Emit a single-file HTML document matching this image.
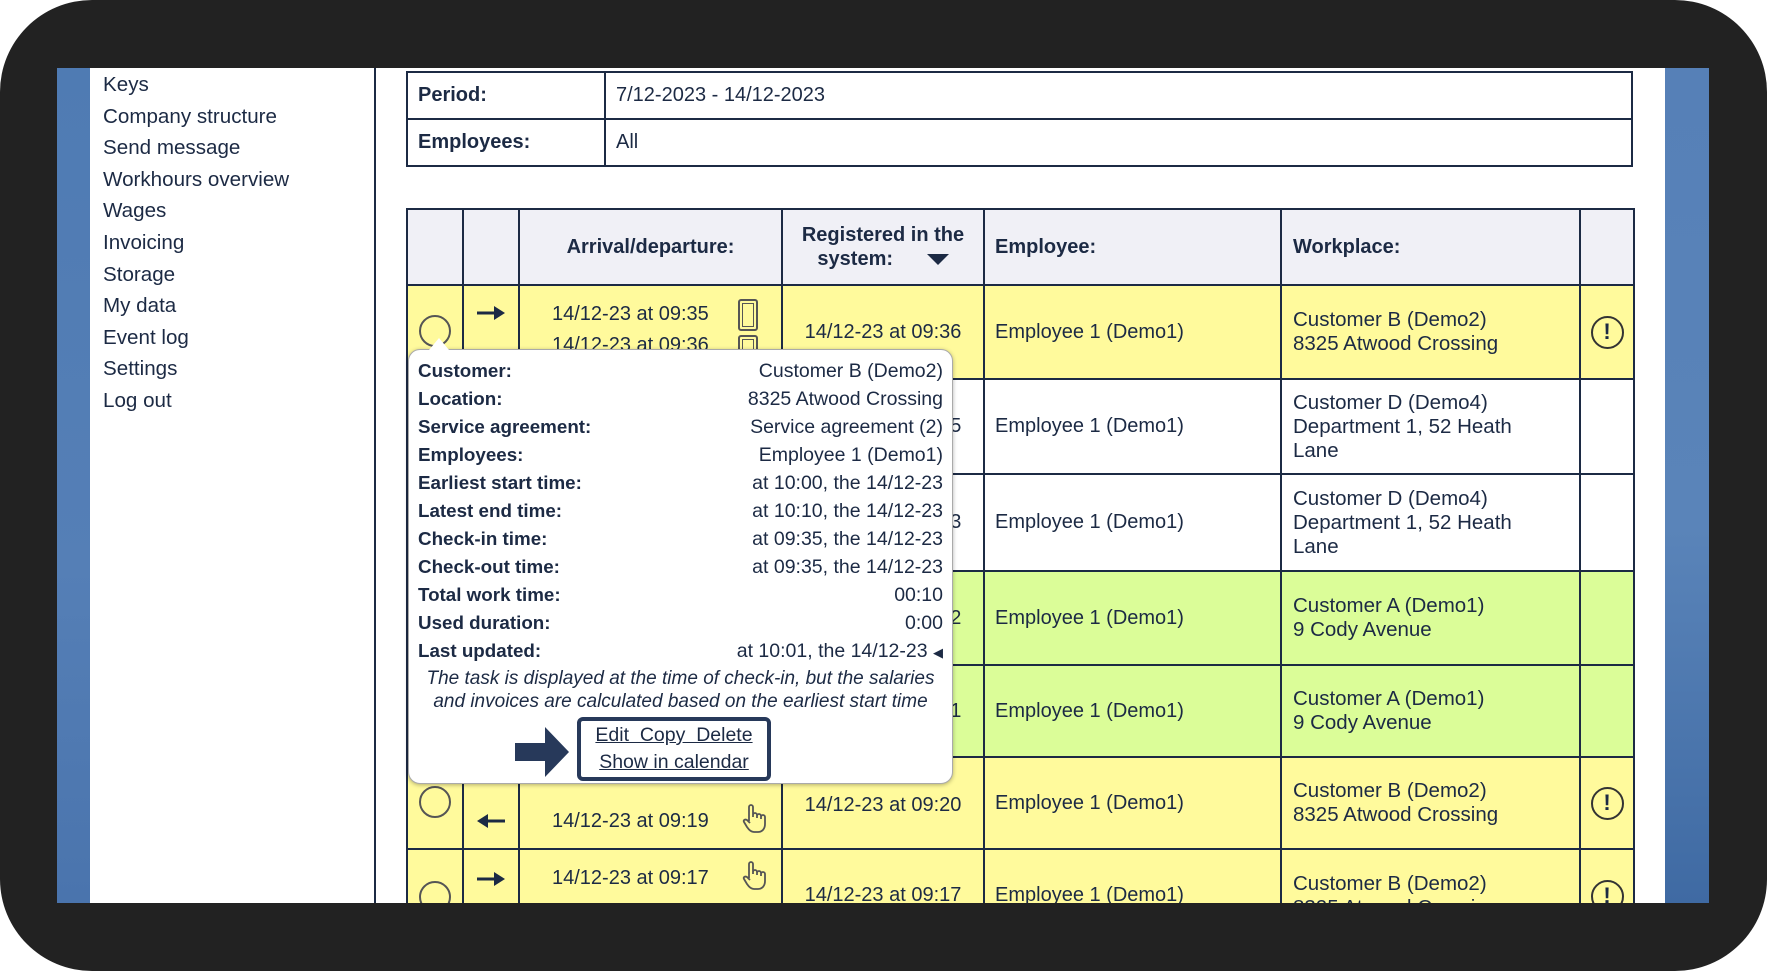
<!DOCTYPE html>
<html><head><meta charset="utf-8"><style>
*{margin:0;padding:0;box-sizing:border-box}
body{width:1767px;height:971px;background:#fff;position:relative;overflow:hidden;font-family:"Liberation Sans",Arial,sans-serif;color:#1c2a44}
.frame{position:absolute;left:0;top:0;width:1767px;height:971px;background:#222;border-radius:92px}
.screen{position:absolute;left:57px;top:68px;width:1652px;height:835px;background:#fff;overflow:hidden}
.bl{position:absolute;left:0;top:0;width:33px;height:835px;background:linear-gradient(#4f7bb3,#557fb6 60%,#4a74ad)}
.br{position:absolute;left:1608px;top:0;width:44px;height:835px;background:linear-gradient(#5680b7,#5a84b9 55%,#3f6aa3)}
.nav{position:absolute;left:33px;top:0;width:286px;height:835px;border-right:2px solid #1c2a44}
.nav div{position:absolute;left:13px;font-size:20.6px;color:#1c2a44}
table{border-collapse:collapse;position:absolute;table-layout:fixed}
td{border:2px solid #1c2a44;font-size:20px;vertical-align:middle}
.top td{height:47px;padding-left:10px}
.main th{border:2px solid #1c2a44;background:#f0f0f6;font-size:20px;font-weight:bold;height:76px}
.y td{background:#fffa9c}.g td{background:#dbfd98}.w td{background:#fff}
.c{text-align:center}.p{padding-left:10px}.wp{padding-left:11px;line-height:24px;font-size:20.5px}
.circ{display:inline-block;width:32px;height:32px;border:2px solid #555;border-radius:50%}
.exc{display:inline-block;width:33px;height:33px;border:2.5px solid #333;border-radius:50%;text-align:center;font-weight:bold;font-size:22px;line-height:28px}
.pop{position:absolute;left:351px;top:281px;width:545px;height:435px;background:#fff;border:1.5px solid #aaa;border-radius:12px;box-shadow:0 1px 4px rgba(0,0,0,.3)}
.pop .r{position:absolute;left:9px;right:9px;font-size:18.8px;height:24px}
.pop .r b{position:absolute;left:0}
.pop .r span{position:absolute;right:0;font-size:19.5px}
.ph{position:absolute;width:20px;height:32px;border:2.5px solid #555;border-radius:3px}
.ph:after{content:"";position:absolute;left:2px;top:2px;right:2px;bottom:2px;border:1.5px solid #555}
</style></head><body>
<div class="frame"></div>
<div class="screen">
 <div class="bl"></div><div class="br"></div>
 <div class="nav">
  <div style="top:5px">Keys</div>
  <div style="top:36.6px">Company structure</div>
  <div style="top:68.2px">Send message</div>
  <div style="top:99.8px">Workhours overview</div>
  <div style="top:131.4px">Wages</div>
  <div style="top:163px">Invoicing</div>
  <div style="top:194.6px">Storage</div>
  <div style="top:226.2px">My data</div>
  <div style="top:257.8px">Event log</div>
  <div style="top:289.4px">Settings</div>
  <div style="top:321px">Log out</div>
 </div>
 <table class="top" style="left:349px;top:3px;width:1227px">
  <colgroup><col style="width:198px"><col></colgroup>
  <tr><td><b>Period:</b></td><td>7/12-2023 - 14/12-2023</td></tr>
  <tr><td><b>Employees:</b></td><td>All</td></tr>
 </table>
 <table class="main" style="left:349px;top:140px;width:1227px">
  <colgroup><col style="width:56px"><col style="width:56px"><col style="width:263px"><col style="width:202px"><col style="width:297px"><col style="width:299px"><col style="width:54px"></colgroup>
  <tr><th></th><th></th><th>Arrival/departure:</th><th style="line-height:24px">Registered in the<br>system: <span style="display:inline-block;width:0;height:0;border-left:11px solid transparent;border-right:11px solid transparent;border-top:11px solid #1c2a44;margin-left:28px;vertical-align:middle"></span></th><th style="text-align:left;padding-left:10px">Employee:</th><th style="text-align:left;padding-left:11px">Workplace:</th><th></th></tr>
  <tr class="y" style="height:94px"><td class="c" style="vertical-align:top;padding-top:29px"><span class="circ"></span></td><td class="c" style="vertical-align:top;padding-top:18px"><svg width="28" height="16"><path d="M0 6.5h17V1l11 7-11 7V9.5H0z" fill="#1c2a44"/></svg></td><td style="vertical-align:top;padding:17px 0 0 32px;position:relative">14/12-23 at 09:35<br><span style="position:relative;top:8px">14/12-23 at 09:36</span><span class="ph" style="left:218px;top:13px"></span><span class="ph" style="left:218px;top:49px"></span></td><td class="c">14/12-23 at 09:36</td><td class="p">Employee 1 (Demo1)</td><td class="wp">Customer B (Demo2)<br>8325 Atwood Crossing</td><td class="c"><span class="exc">!</span></td></tr>
  <tr class="w" style="height:95px"><td></td><td></td><td></td><td class="c">14/12-23 at 09:35</td><td class="p">Employee 1 (Demo1)</td><td class="wp">Customer D (Demo4)<br>Department 1, 52 Heath<br>Lane</td><td></td></tr>
  <tr class="w" style="height:97px"><td></td><td></td><td></td><td class="c">14/12-23 at 09:33</td><td class="p">Employee 1 (Demo1)</td><td class="wp">Customer D (Demo4)<br>Department 1, 52 Heath<br>Lane</td><td></td></tr>
  <tr class="g" style="height:94px"><td></td><td></td><td></td><td class="c">14/12-23 at 09:22</td><td class="p">Employee 1 (Demo1)</td><td class="wp">Customer A (Demo1)<br>9 Cody Avenue</td><td></td></tr>
  <tr class="g" style="height:92px"><td></td><td></td><td></td><td class="c">14/12-23 at 09:21</td><td class="p">Employee 1 (Demo1)</td><td class="wp">Customer A (Demo1)<br>9 Cody Avenue</td><td></td></tr>
  <tr class="y" style="height:92px"><td class="c" style="vertical-align:top;padding-top:28px"><span class="circ"></span></td><td class="c" style="vertical-align:top;padding-top:54px"><svg width="28" height="16"><path d="M28 6.5H11V1L0 8l11 7V9.5h17z" fill="#1c2a44"/></svg></td><td style="padding:52px 0 0 32px;position:relative;vertical-align:top">14/12-23 at 09:19<svg style="position:absolute;left:221px;top:46px" width="26" height="30" viewBox="0 0 26 30"><path d="M8 17V3a2 2 0 0 1 4 0v10M12 11a2 2 0 0 1 4 0v3M16 12a2 2 0 0 1 4 0v3M20 13a2 2 0 0 1 4 0v7c0 5-3 8-7 8h-4c-3 0-5-2-7-5l-3-5c-1-2 1-3 3-2l3 3" fill="none" stroke="#555" stroke-width="1.8" stroke-linejoin="round"/></svg></td><td class="c" style="vertical-align:top;padding-top:36px">14/12-23 at 09:20</td><td class="p">Employee 1 (Demo1)</td><td class="wp">Customer B (Demo2)<br>8325 Atwood Crossing</td><td class="c"><span class="exc">!</span></td></tr>
  <tr class="y" style="height:94px"><td class="c" style="vertical-align:top;padding-top:31px"><span class="circ"></span></td><td class="c" style="vertical-align:top;padding-top:20px"><svg width="28" height="16"><path d="M0 6.5h17V1l11 7-11 7V9.5H0z" fill="#1c2a44"/></svg></td><td style="padding:17px 0 0 32px;position:relative;vertical-align:top">14/12-23 at 09:17<svg style="position:absolute;left:221px;top:11px" width="26" height="30" viewBox="0 0 26 30"><path d="M8 17V3a2 2 0 0 1 4 0v10M12 11a2 2 0 0 1 4 0v3M16 12a2 2 0 0 1 4 0v3M20 13a2 2 0 0 1 4 0v7c0 5-3 8-7 8h-4c-3 0-5-2-7-5l-3-5c-1-2 1-3 3-2l3 3" fill="none" stroke="#555" stroke-width="1.8" stroke-linejoin="round"/></svg></td><td class="c" style="vertical-align:top;padding-top:34px">14/12-23 at 09:17</td><td class="p" style="vertical-align:top;padding-top:34px">Employee 1 (Demo1)</td><td class="wp" style="vertical-align:top;padding-top:22px">Customer B (Demo2)<br>8325 Atwood Crossing</td><td class="c" style="vertical-align:top;padding-top:30px"><span class="exc">!</span></td></tr>
 </table>
 <div class="pop">
  <div style="position:absolute;left:20px;top:-12px;width:0;height:0;border-left:10px solid transparent;border-right:10px solid transparent;border-bottom:12px solid #fff"></div>
  <div class="r" style="top:10px"><b>Customer:</b><span>Customer B (Demo2)</span></div>
  <div class="r" style="top:38px"><b>Location:</b><span>8325 Atwood Crossing</span></div>
  <div class="r" style="top:66px"><b>Service agreement:</b><span>Service agreement (2)</span></div>
  <div class="r" style="top:94px"><b>Employees:</b><span>Employee 1 (Demo1)</span></div>
  <div class="r" style="top:122px"><b>Earliest start time:</b><span>at 10:00, the 14/12-23</span></div>
  <div class="r" style="top:150px"><b>Latest end time:</b><span>at 10:10, the 14/12-23</span></div>
  <div class="r" style="top:178px"><b>Check-in time:</b><span>at 09:35, the 14/12-23</span></div>
  <div class="r" style="top:206px"><b>Check-out time:</b><span>at 09:35, the 14/12-23</span></div>
  <div class="r" style="top:234px"><b>Total work time:</b><span>00:10</span></div>
  <div class="r" style="top:262px"><b>Used duration:</b><span>0:00</span></div>
  <div class="r" style="top:290px"><b>Last updated:</b><span>at 10:01, the 14/12-23 <small style="font-size:13px">&#9664;</small></span></div>
  <div style="position:absolute;left:0;right:0;top:317px;text-align:center;font-style:italic;font-size:19px;line-height:23px">The task is displayed at the time of check-in, but the salaries<br>and invoices are calculated based on the earliest start time</div>
  <svg style="position:absolute;left:106px;top:377px" width="55" height="50"><path d="M0 16h30V0l24 25-24 25V34H0z" fill="#27395a"/></svg>
  <div style="position:absolute;left:168px;top:367px;width:194px;height:64px;border:4px solid #27395a;border-radius:6px;text-align:center;font-size:19.5px;line-height:27px;text-decoration:underline;padding-top:1px">Edit&nbsp; Copy&nbsp; Delete<br>Show in calendar</div>
 </div>
</div>
</body></html>
